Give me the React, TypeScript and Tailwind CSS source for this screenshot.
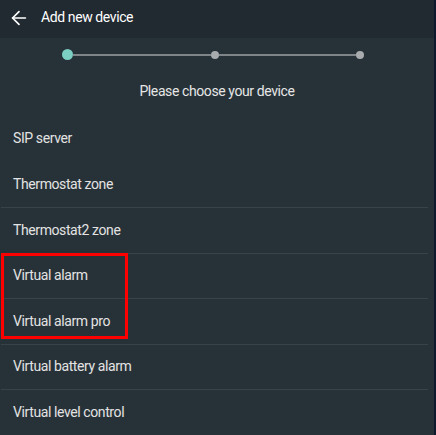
import { ArrowLeft } from 'lucide-react'

const devices = [
  { name: 'SIP server', divider: false },
  { name: 'Thermostat zone', divider: false },
  { name: 'Thermostat2 zone', divider: true },
  { name: 'Virtual alarm', divider: true },
  { name: 'Virtual alarm pro', divider: true },
  { name: 'Virtual battery alarm', divider: true },
  { name: 'Virtual level control', divider: true },
]

function Stepper() {
  return (
    <div className="flex items-center h-[33px] pl-[62px] pr-[70px]">
      <div className="w-[11px] h-[11px] rounded-full bg-[#7ccfc3] shrink-0" />
      <div className="flex-1 h-[2px] bg-[#7f8589]" />
      <div className="w-[8px] h-[8px] rounded-full bg-[#a9acae] shrink-0" />
      <div className="flex-1 h-[2px] bg-[#7f8589]" />
      <div className="w-[8px] h-[8px] rounded-full bg-[#a9acae] shrink-0" />
    </div>
  )
}

export default function App() {
  return (
    <div
      className="w-[436px] h-[435px] overflow-hidden flex bg-[#273238] text-[14px] tracking-[-0.4px]"
      style={{ fontFamily: 'Roboto, "Liberation Sans", sans-serif' }}
    >
      <div className="flex-1 flex flex-col">
        {/* Header */}
        <div className="h-[38px] shrink-0 flex items-center bg-[#222a31] pl-[8px]">
          <ArrowLeft size={22} strokeWidth={1.8} className="text-white mb-[3px]" />
          <span className="ml-[11px] text-white mb-[3px]">Add new device</span>
        </div>

        <Stepper />

        <div className="h-[45px] flex items-center justify-center text-[#e6e6e6] pb-[4px]">
          Please choose your device
        </div>

        {/* Device list */}
        <div className="relative flex flex-col mr-[6px] ml-[1px]">
          {devices.map(d => (
            <div
              key={d.name}
              className={`h-[45.5px] flex items-center pl-[12px] text-[#e3e3e3] ${
                d.divider ? 'border-t border-[#384348]' : ''
              }`}
            >
              {d.name}
            </div>
          ))}

          {/* Highlight box */}
          <div className="absolute left-0 top-[137px] w-[127px] h-[86px] border-[3px] border-[#ff0000] pointer-events-none" />
        </div>
      </div>
      <div className="w-[2px] bg-[#0d1a2d]" />
    </div>
  )
}
